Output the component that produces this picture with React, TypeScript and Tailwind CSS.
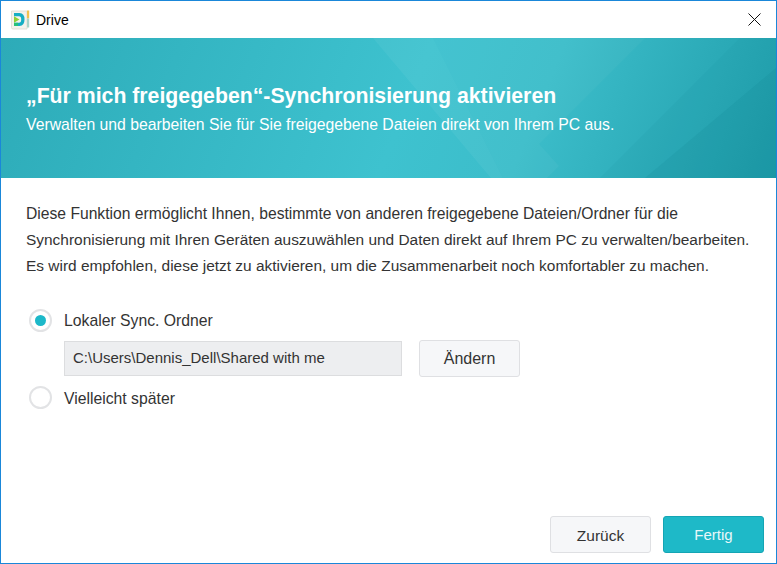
const headerBackground = "linear-gradient(112deg, #2dabb8 0%, #34b5c2 22%, #3ec2cf 52%, #3cbdca 68%, #2cabb8 86%, #1f9eab 100%)";

function DriveLogo() {
  return (
    <svg width="19" height="20" viewBox="0 0 19 20">
      <path d="M0.5 1 H16 V19 H2 Q0.5 19 0.5 17.5 Z" fill="#f3f2ec" stroke="#dcdad0" strokeWidth="0.8" />
      <rect x="16" y="0.5" width="2.2" height="8" fill="#f2c14e" />
      <rect x="16" y="8.5" width="2.2" height="9" fill="#a9d3c8" />
      <path d="M3 3 H8.5 Q13.5 3 13.5 9.5 Q13.5 16 8.5 16 H3 V12.8 H8 Q10.2 12.8 10.2 9.5 Q10.2 6.2 8 6.2 H3 Z" fill="#15aec4" />
      <path d="M3 6.2 L8.5 9.6 L3 12.8 Z" fill="#8fd032" />
      <path d="M3 12.8 H7 V16 H3 Z" fill="#27c07a" />
    </svg>
  );
}

function HeaderArt() {
  return (
    <svg className="absolute inset-0 h-full w-full" viewBox="0 0 775 140" preserveAspectRatio="none">
      <polygon points="432,0 644,0 504,140 502,140" fill="#ffffff" fillOpacity="0.03" />
      <polygon points="372,0 432,0 502,140 490,140" fill="#ffffff" fillOpacity="0.05" />
      <polygon points="504,140 538,106 558,128 546,140" fill="#ffffff" fillOpacity="0.035" />
      <polygon points="599,140 739,0 775,0 775,140" fill="#0b7f8c" fillOpacity="0.07" />
      <polygon points="644,140 775,30 775,140" fill="#0b7f8c" fillOpacity="0.14" />
    </svg>
  );
}

function Radio({ checked }: { checked?: boolean }) {
  return (
    <span className="flex h-[23px] w-[23px] shrink-0 items-center justify-center rounded-full border-2 border-[#e2e3e5] bg-white">
      {checked && <span className="h-[11px] w-[11px] rounded-full bg-[#1cb8c9]" />}
    </span>
  );
}

export default function App() {
  return (
    <div className="flex h-[564px] w-[777px] flex-col border border-[#1a87d9] bg-white font-['Liberation_Sans',Arial,sans-serif] text-[#333]">
      <div className="flex h-[37px] shrink-0 items-center pl-[10px] pr-[15px]">
        <DriveLogo />
        <span className="ml-[6px] pt-[1px] text-[14px] text-black">Drive</span>
        <svg className="ml-auto" width="13" height="13" viewBox="0 0 13 13">
          <path d="M0.5 0.5 L12.5 12.5 M12.5 0.5 L0.5 12.5" stroke="#111" strokeWidth="1" fill="none" />
        </svg>
      </div>

      <div className="relative h-[140px] shrink-0 overflow-hidden" style={{ background: headerBackground }}>
        <HeaderArt />
        <div className="relative pl-[25px] pt-[45px] text-white">
          <h1 className="text-[21.25px] font-bold leading-[26px] whitespace-nowrap">„Für mich freigegeben“-Synchronisierung aktivieren</h1>
          <p className="mt-[7px] text-[15.75px] leading-[18px] whitespace-nowrap">Verwalten und bearbeiten Sie für Sie freigegebene Dateien direkt von Ihrem PC aus.</p>
        </div>
      </div>

      <div className="flex flex-1 flex-col pl-[25px] pr-[12px]">
        <div className="mt-[23px] text-[15.44px] leading-[26px] whitespace-nowrap">
          <p className="text-[15.67px]">Diese Funktion ermöglicht Ihnen, bestimmte von anderen freigegebene Dateien/Ordner für die</p>
          <p>Synchronisierung mit Ihren Geräten auszuwählen und Daten direkt auf Ihrem PC zu verwalten/bearbeiten.</p>
          <p>Es wird empfohlen, diese jetzt zu aktivieren, um die Zusammenarbeit noch komfortabler zu machen.</p>
        </div>

        <label className="mt-[29px] flex items-center gap-[12px] pl-[3px] text-[15.75px]">
          <Radio checked />
          <span className="pt-[1px]">Lokaler Sync. Ordner</span>
        </label>

        <div className="mt-[7px] flex items-center pl-[38px]">
          <div className="flex h-[35px] w-[338px] items-center border border-[#dcdddf] bg-[#edeef0] pl-[8px] text-[15px]">
            C:\Users\Dennis_Dell\Shared with me
          </div>
          <button className="ml-[17px] h-[37px] w-[101px] rounded-[3px] border border-[#dfe0e3] bg-[#f6f7f9] pt-[1px] text-[16px]">
            Ändern
          </button>
        </div>

        <label className="mt-[9px] flex items-center gap-[12px] pl-[3px] text-[15.75px]">
          <Radio />
          <span className="pt-[1px]">Vielleicht später</span>
        </label>

        <div className="mt-auto mb-[10px] flex justify-end gap-[12px]">
          <button className="h-[37px] w-[101px] rounded-[3px] border border-[#dfe0e3] bg-[#f6f7f9] pt-[2px] text-[15.5px]">
            Zurück
          </button>
          <button className="h-[37px] w-[101px] rounded-[3px] border border-[#14a5b4] bg-[#1eb9c8] pt-[2px] text-[15px] text-[#e8f8fa]">
            Fertig
          </button>
        </div>
      </div>
    </div>
  );
}
